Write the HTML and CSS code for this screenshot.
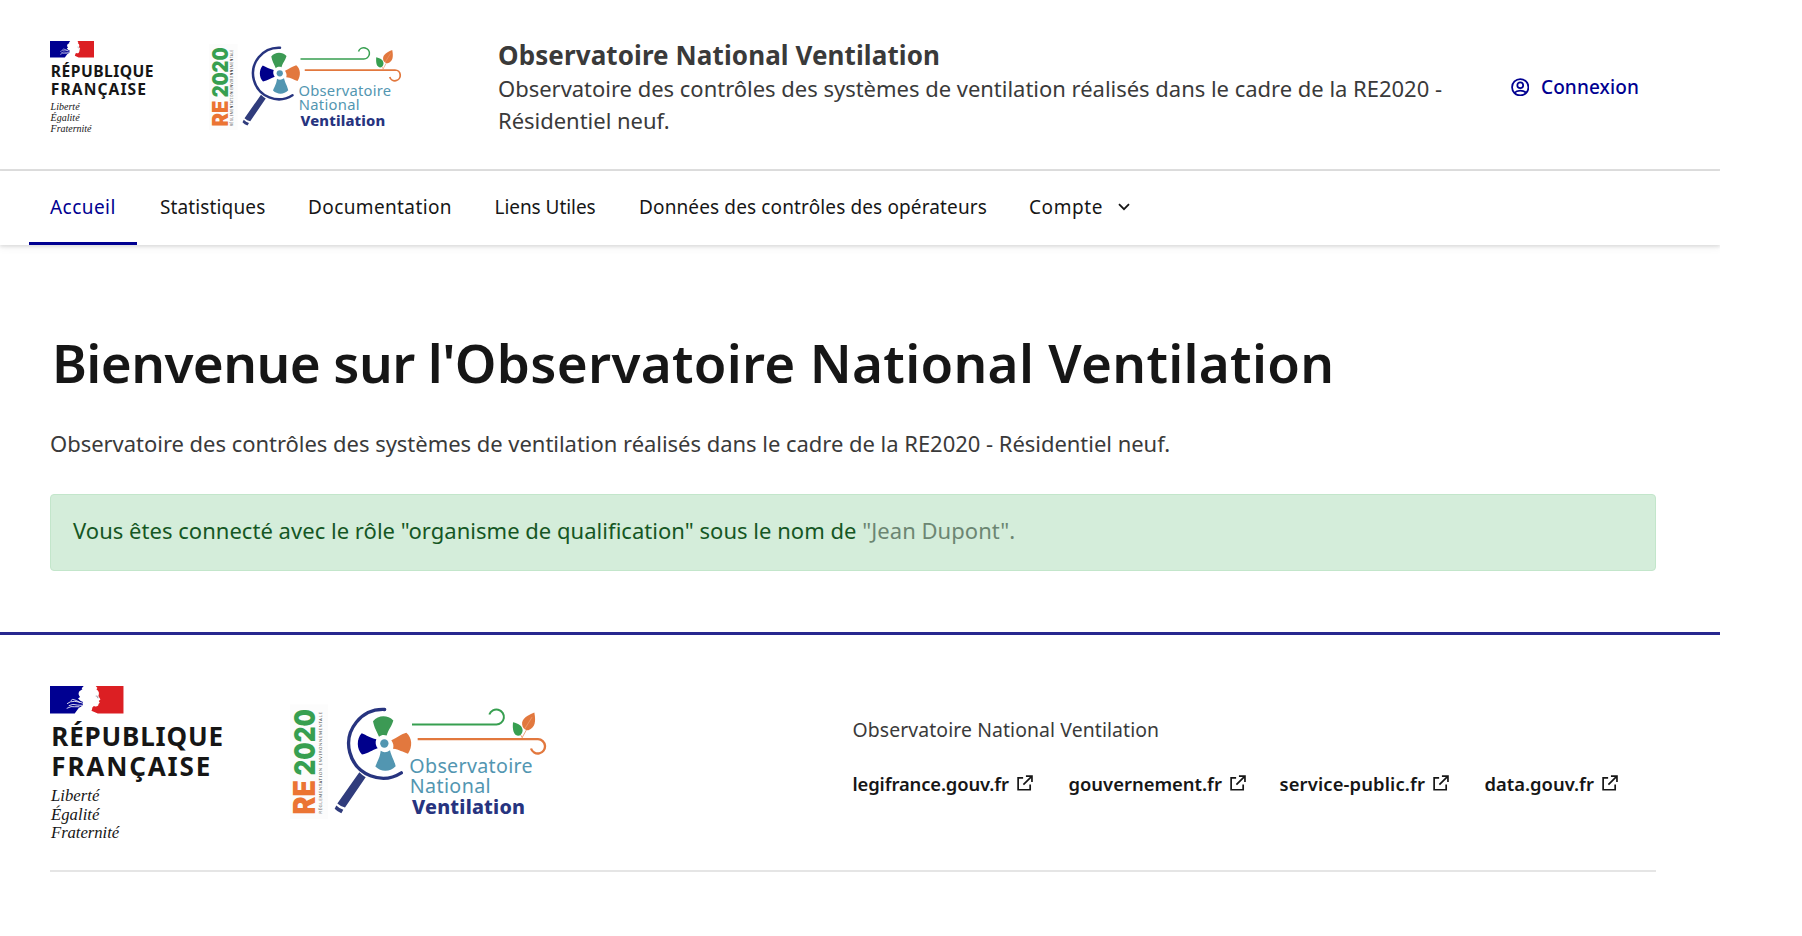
FILE: index.html
```
<!DOCTYPE html>
<html lang="fr">
<head>
<meta charset="utf-8">
<title>Observatoire National Ventilation</title>
<link rel="stylesheet" href="styles.css">
</head>
<body>
<header class="header">
  <div class="header-body">
    <svg class="header-rf" viewBox="0 0 530 470">
      <path fill="#000091" d="M0 0H101L95 7L97 10L88 16C84 22 85 27 90 33L84 37L92 45L99 48L98 58L86 66L74 82H0Z"/>
      <path fill="#dc1f23" d="M137 0H220V82H143L124 74C128 69 124 63 132 60C138 64 147 60 145 54L149 50L146 45L151 40L145 30C148 22 147 16 139 10L142 6Z"/>
      <path fill="none" stroke="#fff" stroke-width="2.500" d="M51 53Q60 45 74 46T100 52M62 44L68 40Q80 42 90 50M56 59Q68 52 82 57L98 58M50 67Q64 59 74 62L88 62"/>
      <path stroke="#9a9aa8" stroke-width="3" d="M137 30l7 1M141 34l4 2"/>
      <g class="logo-caps" font-size="78">
        <text x="4" y="180" textLength="514">RÉPUBLIQUE</text>
        <text x="4" y="268" textLength="476">FRANÇAISE</text>
      </g>
      <g class="logo-motto" font-size="50">
        <text x="3" y="344" textLength="145">Liberté</text>
        <text x="3" y="400" textLength="145">Égalité</text>
        <text x="3" y="456" textLength="204">Fraternité</text>
      </g>
    </svg>
    <svg class="header-onv" viewBox="30 40 780 350">
      <rect x="24" y="44" width="120" height="344" fill="#fcfcfc"/>
      <g transform="translate(104 373) rotate(-90)">
        <text class="logo-heavy" x="-1" font-size="88" fill="#eb7433" textLength="103" lengthAdjust="spacingAndGlyphs">RE</text>
        <text class="logo-heavy" x="116" font-size="86" fill="#379f50" textLength="199" lengthAdjust="spacingAndGlyphs">2020</text>
        <text class="logo-small" x="1" y="22" font-size="13" fill="#444" textLength="305">RÉGLEMENTATION ENVIRONNEMENTALE</text>
      </g>
      <g fill="none" stroke-linecap="round">
        <path stroke="#27347f" stroke-width="10" d="M314 59A103 103 0 1 0 364 249"/>
        <path stroke="#379f50" stroke-width="6" stroke-linecap="butt" d="M396 104H648A22.500 22.500 0 1 0 628 74"/>
        <path stroke="#e2783e" stroke-width="7" stroke-linecap="butt" d="M413 148H774A21.500 21.500 0 1 1 753 176"/>
        <path stroke="#e2783e" stroke-width="2" d="M726 144L744 112M726 142L716 126"/>
      </g>
      <path fill="#303c7c" d="M238 247Q248 257 257 262L195 353Q182 350 172 341ZM169 347Q178 356 190 360L184 370Q172 366 164 357Z"/>
      <path fill="#3c9a54" d="M279 94C295 75 323 75 340 92C334 112 326 117 320 137C311 134 304 135 297 141C289 121 283 114 279 94Z"/>
      <path fill="#e2783e" d="M379 129C397 144 398 171 384 192C368 187 358 179 339 177C342 168 340 160 334 151C352 144 360 134 379 129Z"/>
      <path fill="#5296b1" d="M347 229C330 247 303 247 286 230C292 214 300 204 302 183C311 189 321 188 330 181C335 202 343 211 347 229Z"/>
      <path fill="#00008b" d="M245 130C260 136 270 144 289 148C285 157 287 167 293 175C276 180 266 190 246 194C230 178 229 147 245 130Z"/>
      <circle cx="313" cy="161" r="12.500" fill="#5296b1"/>
      <path fill="#379f50" d="M699 97C716 101 728 108 728 123C726 133 721 138 714 138C700 135 697 119 699 97Z"/>
      <path fill="#e2783e" d="M763 68C734 80 721 91 728 111C732 118 738 122 745 121C766 113 768 95 763 68Z"/>
      <path stroke="#f3b593" stroke-width="1.500" fill="none" d="M735 116L756 82"/>
      <g class="logo-name" font-size="59">
        <text x="388" y="250" textLength="370">Observatoire</text>
        <text x="389" y="309" textLength="243">National</text>
        <text class="logo-strong" x="396" y="372" textLength="339">Ventilation</text>
      </g>
    </svg>
    <div class="service">
      <p class="service-title">Observatoire National Ventilation</p>
      <p class="service-tagline">Observatoire des contrôles des systèmes de ventilation réalisés dans le cadre de la RE2020 -<br>Résidentiel neuf.</p>
    </div>
    <a class="login">
      <svg class="login-icon" viewBox="0 0 19 19" fill="none" stroke="currentColor" stroke-width="1.800"><circle cx="9.500" cy="9.500" r="8.400"/><circle cx="9.500" cy="7.500" r="3"/><path d="M3.700 15.200Q5.500 12.900 9.500 12.900T15.300 15.200"/></svg>
      <span>Connexion</span>
    </a>
  </div>
  <nav class="nav">
    <a class="nav-item nav-current">Accueil</a>
    <a class="nav-item">Statistiques</a>
    <a class="nav-item nav-loose">Documentation</a>
    <a class="nav-item nav-tight">Liens Utiles</a>
    <a class="nav-item">Données des contrôles des opérateurs</a>
    <a class="nav-item nav-menu">Compte<svg class="chevron" viewBox="0 0 12 8" fill="none" stroke="currentColor" stroke-width="1.800"><path d="M1 1.200L6 6.200L11 1.200"/></svg></a>
  </nav>
</header>

<main class="main">
  <h1 class="title"><span class="title-lead">Bienvenue sur l'</span>Observatoire National Ventilation</h1>
  <p class="intro">Observatoire des contrôles des systèmes de ventilation réalisés dans le cadre de la RE2020 - Résidentiel neuf.</p>
  <p class="alert">Vous êtes connecté avec le rôle "organisme de qualification" sous le nom de <span class="alert-name">"Jean Dupont".</span></p>
</main>

<footer class="footer">
  <div class="footer-body">
    <svg class="footer-rf" viewBox="0 0 530 470">
      <path fill="#000091" d="M0 0H101L95 7L97 10L88 16C84 22 85 27 90 33L84 37L92 45L99 48L98 58L86 66L74 82H0Z"/>
      <path fill="#dc1f23" d="M137 0H220V82H143L124 74C128 69 124 63 132 60C138 64 147 60 145 54L149 50L146 45L151 40L145 30C148 22 147 16 139 10L142 6Z"/>
      <path fill="none" stroke="#fff" stroke-width="2.500" d="M51 53Q60 45 74 46T100 52M62 44L68 40Q80 42 90 50M56 59Q68 52 82 57L98 58M50 67Q64 59 74 62L88 62"/>
      <path stroke="#9a9aa8" stroke-width="3" d="M137 30l7 1M141 34l4 2"/>
      <g class="logo-caps" font-size="78">
        <text x="4" y="180" textLength="514">RÉPUBLIQUE</text>
        <text x="4" y="268" textLength="476">FRANÇAISE</text>
      </g>
      <g class="logo-motto" font-size="50">
        <text x="3" y="344" textLength="145">Liberté</text>
        <text x="3" y="400" textLength="145">Égalité</text>
        <text x="3" y="456" textLength="204">Fraternité</text>
      </g>
    </svg>
    <svg class="footer-onv" viewBox="30 40 780 350">
      <rect x="24" y="44" width="120" height="344" fill="#fcfcfc"/>
      <g transform="translate(104 373) rotate(-90)">
        <text class="logo-heavy" x="-1" font-size="88" fill="#eb7433" textLength="103" lengthAdjust="spacingAndGlyphs">RE</text>
        <text class="logo-heavy" x="116" font-size="86" fill="#379f50" textLength="199" lengthAdjust="spacingAndGlyphs">2020</text>
        <text class="logo-small" x="1" y="22" font-size="13" fill="#444" textLength="305">RÉGLEMENTATION ENVIRONNEMENTALE</text>
      </g>
      <g fill="none" stroke-linecap="round">
        <path stroke="#27347f" stroke-width="10" d="M314 59A103 103 0 1 0 364 249"/>
        <path stroke="#379f50" stroke-width="6" stroke-linecap="butt" d="M396 104H648A22.500 22.500 0 1 0 628 74"/>
        <path stroke="#e2783e" stroke-width="7" stroke-linecap="butt" d="M413 148H774A21.500 21.500 0 1 1 753 176"/>
        <path stroke="#e2783e" stroke-width="2" d="M726 144L744 112M726 142L716 126"/>
      </g>
      <path fill="#303c7c" d="M238 247Q248 257 257 262L195 353Q182 350 172 341ZM169 347Q178 356 190 360L184 370Q172 366 164 357Z"/>
      <path fill="#3c9a54" d="M279 94C295 75 323 75 340 92C334 112 326 117 320 137C311 134 304 135 297 141C289 121 283 114 279 94Z"/>
      <path fill="#e2783e" d="M379 129C397 144 398 171 384 192C368 187 358 179 339 177C342 168 340 160 334 151C352 144 360 134 379 129Z"/>
      <path fill="#5296b1" d="M347 229C330 247 303 247 286 230C292 214 300 204 302 183C311 189 321 188 330 181C335 202 343 211 347 229Z"/>
      <path fill="#00008b" d="M245 130C260 136 270 144 289 148C285 157 287 167 293 175C276 180 266 190 246 194C230 178 229 147 245 130Z"/>
      <circle cx="313" cy="161" r="12.500" fill="#5296b1"/>
      <path fill="#379f50" d="M699 97C716 101 728 108 728 123C726 133 721 138 714 138C700 135 697 119 699 97Z"/>
      <path fill="#e2783e" d="M763 68C734 80 721 91 728 111C732 118 738 122 745 121C766 113 768 95 763 68Z"/>
      <path stroke="#f3b593" stroke-width="1.500" fill="none" d="M735 116L756 82"/>
      <g class="logo-name" font-size="59">
        <text x="388" y="250" textLength="370">Observatoire</text>
        <text x="389" y="309" textLength="243">National</text>
        <text class="logo-strong" x="396" y="372" textLength="339">Ventilation</text>
      </g>
    </svg>
    <div class="footer-content">
      <p class="footer-title">Observatoire National Ventilation</p>
      <div class="footer-links">
        <a class="footer-link link-tight">legifrance.gouv.fr<svg class="external" viewBox="0 0 17 17"><path d="M6.500 3H1.200V15.700H14V10M9.500 1.100H15.900V7.500M15.600 1.400L6.800 10.200"/></svg></a>
        <a class="footer-link">gouvernement.fr<svg class="external" viewBox="0 0 17 17"><path d="M6.500 3H1.200V15.700H14V10M9.500 1.100H15.900V7.500M15.600 1.400L6.800 10.200"/></svg></a>
        <a class="footer-link link-loose">service-public.fr<svg class="external" viewBox="0 0 17 17"><path d="M6.500 3H1.200V15.700H14V10M9.500 1.100H15.900V7.500M15.600 1.400L6.800 10.200"/></svg></a>
        <a class="footer-link">data.gouv.fr<svg class="external" viewBox="0 0 17 17"><path d="M6.500 3H1.200V15.700H14V10M9.500 1.100H15.900V7.500M15.600 1.400L6.800 10.200"/></svg></a>
      </div>
    </div>
  </div>
</footer>
</body>
</html>
```
FILE: styles.css
```
* { box-sizing: border-box; }
body {
  margin: 0;
  width: 1720px;
  background: #fff;
  color: #3a3a3a;
  font: 22px/32px "Noto Sans", "Open Sans", sans-serif;
}
p, h1 { margin: 0; }
svg { display: block; }

.logo-caps { font-family: "Noto Sans", sans-serif; font-weight: 700; fill: #161616; }
.logo-motto { font-family: "Liberation Serif", serif; font-style: italic; fill: #161616; }
.logo-heavy { font-family: Inter, sans-serif; font-weight: 900; }
.logo-small { font-family: "Noto Sans", sans-serif; }
.logo-name { font-family: "Noto Sans", sans-serif; font-weight: 400; fill: #5296b1; }
.logo-strong { font-weight: 800; fill: #27347f; }

/* keeps the bar's shadow inside the page column */
.header { clip-path: inset(0 0 -12px 0); }
.header-body {
  display: grid;
  grid-template-columns: 159px 289px 1012.5px auto;
  align-items: start;
  height: 171px;
  padding-left: 50px;
  border-bottom: 2px solid #ddd;
}
.header-rf { width: 106px; height: 94px; margin-top: 41px; }
.header-onv { width: 195px; height: 87.5px; margin-top: 43px; }
.service { padding-top: 38px; }
.service-title { font-size: 26px; font-weight: 700; line-height: 34px; letter-spacing: 0.1px; }
.service-tagline { letter-spacing: -0.02px; }
.login {
  display: flex;
  align-items: center;
  gap: 12px;
  margin-top: 71px;
  color: #000091;
  font-size: 19px;
  font-weight: 500;
  letter-spacing: 0.1px;
}
.login-icon { width: 18.5px; height: 18.5px; }

.nav {
  display: grid;
  grid-template-columns: 110px 148px 186.5px 144.5px 390px auto;
  height: 74px;
  padding-left: 50px;
  box-shadow: 0 2px 3px rgba(0, 0, 0, 0.1), 0 4px 8px rgba(0, 0, 0, 0.04);
  color: #161616;
  font-size: 19px;
  line-height: 73px;
  letter-spacing: 0.13px;
}
.nav-item { white-space: nowrap; }
.nav-current {
  justify-self: start;
  margin-left: -21.5px;
  padding: 0 21.5px;
  box-shadow: inset 0 -3px #000091;
  color: #000091;
  letter-spacing: 0.45px;
}
.nav-loose { letter-spacing: 0.38px; }
.nav-tight { letter-spacing: -0.05px; }
.nav-menu { letter-spacing: 0.6px; }
.chevron { display: inline-block; width: 12px; height: 8px; margin-left: 15px; vertical-align: 3px; }

.main { padding: 86px 64px 61px 50px; }
.title {
  padding-left: 2px;
  color: #161616;
  font-size: 53px;
  font-weight: 600;
  line-height: 64px;
  letter-spacing: 0.3px;
  white-space: nowrap;
}
.title-lead { letter-spacing: -0.58px; }
.intro { margin-top: 32px; letter-spacing: -0.03px; }
.alert {
  height: 77px;
  margin-top: 35px;
  padding: 20px 22px;
  border: 1px solid #c3e6cb;
  border-radius: 4px;
  background: #d4edda;
  color: #155724;
  line-height: 31px;
  letter-spacing: 0.03px;
}
.alert-name { color: #6c8672; }

.footer { border-top: 3px solid #27278f; }
.footer-body {
  display: grid;
  grid-template-columns: 240px 562.5px auto;
  align-items: start;
  height: 237px;
  margin: 0 64px 0 50px;
  border-bottom: 2px solid #e5e5e5;
}
.footer-rf { width: 177px; height: 157px; margin-top: 50.5px; }
.footer-onv { width: 260px; height: 117px; margin-top: 68px; }
.footer-content { padding-top: 81px; line-height: 28px; }
.footer-title { font-size: 19.4px; letter-spacing: 0.1px; }
.footer-links {
  display: grid;
  grid-template-columns: 216px 211px 205px auto;
  margin-top: 25.5px;
  color: #161616;
  font-size: 18.4px;
  font-weight: 600;
}
.footer-link { display: flex; align-items: center; gap: 8px; white-space: nowrap; }
.link-tight { letter-spacing: -0.12px; }
.link-loose { letter-spacing: 0.14px; }
.external { width: 16px; height: 16px; margin-top: -2px; fill: none; stroke: #161616; stroke-width: 1.8; }
```
